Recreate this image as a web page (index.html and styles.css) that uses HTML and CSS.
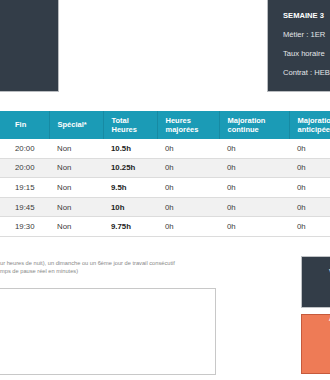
FILE: index.html
```html
<!DOCTYPE html>
<html lang="fr">
<head>
<meta charset="utf-8">
<link rel="stylesheet" href="styles.css">
</head>
<body>
<div class="page">
  <div class="top">
    <div class="logo-box"></div>
    <div class="week-box">
      <div class="week-title">SEMAINE 3</div>
      <div class="week-line">Métier : 1ER</div>
      <div class="week-line">Taux horaire</div>
      <div class="week-line">Contrat : HEBDO</div>
    </div>
  </div>

  <table class="hours">
    <colgroup>
      <col class="c1"><col class="c2"><col class="c3"><col class="c4"><col class="c5"><col class="c6">
    </colgroup>
    <thead>
      <tr>
        <th>Fin</th>
        <th>Spécial*</th>
        <th>Total<br>Heures</th>
        <th>Heures<br>majorées</th>
        <th>Majoration<br>continue</th>
        <th>Majoration<br>anticipée</th>
      </tr>
    </thead>
    <tbody>
      <tr><td>20:00</td><td>Non</td><td class="b">10.5h</td><td>0h</td><td>0h</td><td>0h</td></tr>
      <tr><td>20:00</td><td>Non</td><td class="b">10.25h</td><td>0h</td><td>0h</td><td>0h</td></tr>
      <tr><td>19:15</td><td>Non</td><td class="b">9.5h</td><td>0h</td><td>0h</td><td>0h</td></tr>
      <tr><td>19:45</td><td>Non</td><td class="b">10h</td><td>0h</td><td>0h</td><td>0h</td></tr>
      <tr><td>19:30</td><td>Non</td><td class="b">9.75h</td><td>0h</td><td>0h</td><td>0h</td></tr>
    </tbody>
  </table>

  <div class="bottom">
    <div class="notes">
      <p class="note">ur heures de nuit), un dimanche ou un 6ème jour de travail consécutif<br>mps de pause réel en minutes)</p>
      <div class="comment"></div>
    </div>
    <div class="actions">
      <div class="btn btn-dark">Valider</div>
      <div class="btn btn-orange">Annuler</div>
    </div>
  </div>
</div>
</body>
</html>
```
FILE: styles.css
```css
html, body {
  margin: 0;
  padding: 0;
  background: #fff;
  overflow: hidden;
}
body {
  width: 330px;
  height: 380px;
  font-family: "Liberation Sans", Arial, sans-serif;
  color: #333;
}
.page {
  width: 330px;
  overflow: hidden;
}
.top {
  display: flex;
  justify-content: space-between;
  height: 92px;
}
.logo-box {
  width: 59px;
  height: 92px;
  box-sizing: border-box;
  background: #333d48;
  border-right: 1px solid #b9bcc0;
  border-bottom: 1px solid #b9bcc0;
}
.week-box {
  flex-shrink: 0;
  width: 63px;
  height: 92px;
  box-sizing: border-box;
  background: #333d48;
  border-left: 1px solid #b9bcc0;
  border-bottom: 1px solid #b9bcc0;
  padding: 11px 0 0 15px;
  color: #e4e6e8;
  font-size: 7.6px;
  white-space: nowrap;
  overflow: hidden;
}
.week-title {
  font-weight: bold;
  color: #fff;
  line-height: 10px;
  margin-bottom: 9px;
}
.week-line {
  line-height: 10px;
  margin-bottom: 9px;
}
.hours {
  margin-top: 19px;
  width: 380px;
  table-layout: fixed;
  border-collapse: collapse;
  font-size: 7.8px;
}
.c1 { width: 49px; }
.c2 { width: 54px; }
.c3 { width: 54px; }
.c4 { width: 62px; }
.c5 { width: 70px; }
.c6 { width: 91px; }
.hours th {
  background: #1b9bb6;
  color: #fff;
  font-weight: bold;
  font-size: 7.5px;
  text-align: left;
  height: 28px;
  padding: 0 0 0 8px;
  line-height: 9.5px;
  border-left: 1px solid #178aa3;
  vertical-align: middle;
}
.hours th:first-child {
  padding-left: 15px;
  border-left: none;
}
.hours td {
  height: 18.6px;
  padding: 0 0 0 8px;
  border-bottom: 1px solid #dcdcdc;
  vertical-align: middle;
  white-space: nowrap;
  color: #3a3a3a;
}
.hours td:first-child {
  padding-left: 15px;
}
.hours tbody tr:nth-child(even) td {
  background: #f1f1f1;
}
.hours td.b {
  font-weight: bold;
  color: #222;
}
.bottom {
  display: flex;
  justify-content: space-between;
}
.notes {
  width: 216px;
}
.note {
  margin: 22px 0 0;
  font-size: 5.7px;
  line-height: 8px;
  color: #888;
  white-space: nowrap;
}
.comment {
  margin-top: 13px;
  width: 216px;
  height: 87px;
  box-sizing: border-box;
  border: 1px solid #c8c8c8;
  border-left: none;
}
.actions {
  margin-top: 19px;
  width: 29px;
  flex-shrink: 0;
  display: flex;
  flex-direction: column;
  gap: 6px;
}
.btn {
  box-sizing: border-box;
  width: 60px;
  color: #fff;
  font-size: 7px;
  padding-left: 27px;
  white-space: nowrap;
  overflow: hidden;
}
.btn-dark {
  height: 52px;
  background: #333d48;
  border: 1px solid #c0c3c6;
  line-height: 30px;
}
.btn-orange {
  height: 60px;
  background: #ee7b56;
  border: 1px solid #c65a3c;
}
```
